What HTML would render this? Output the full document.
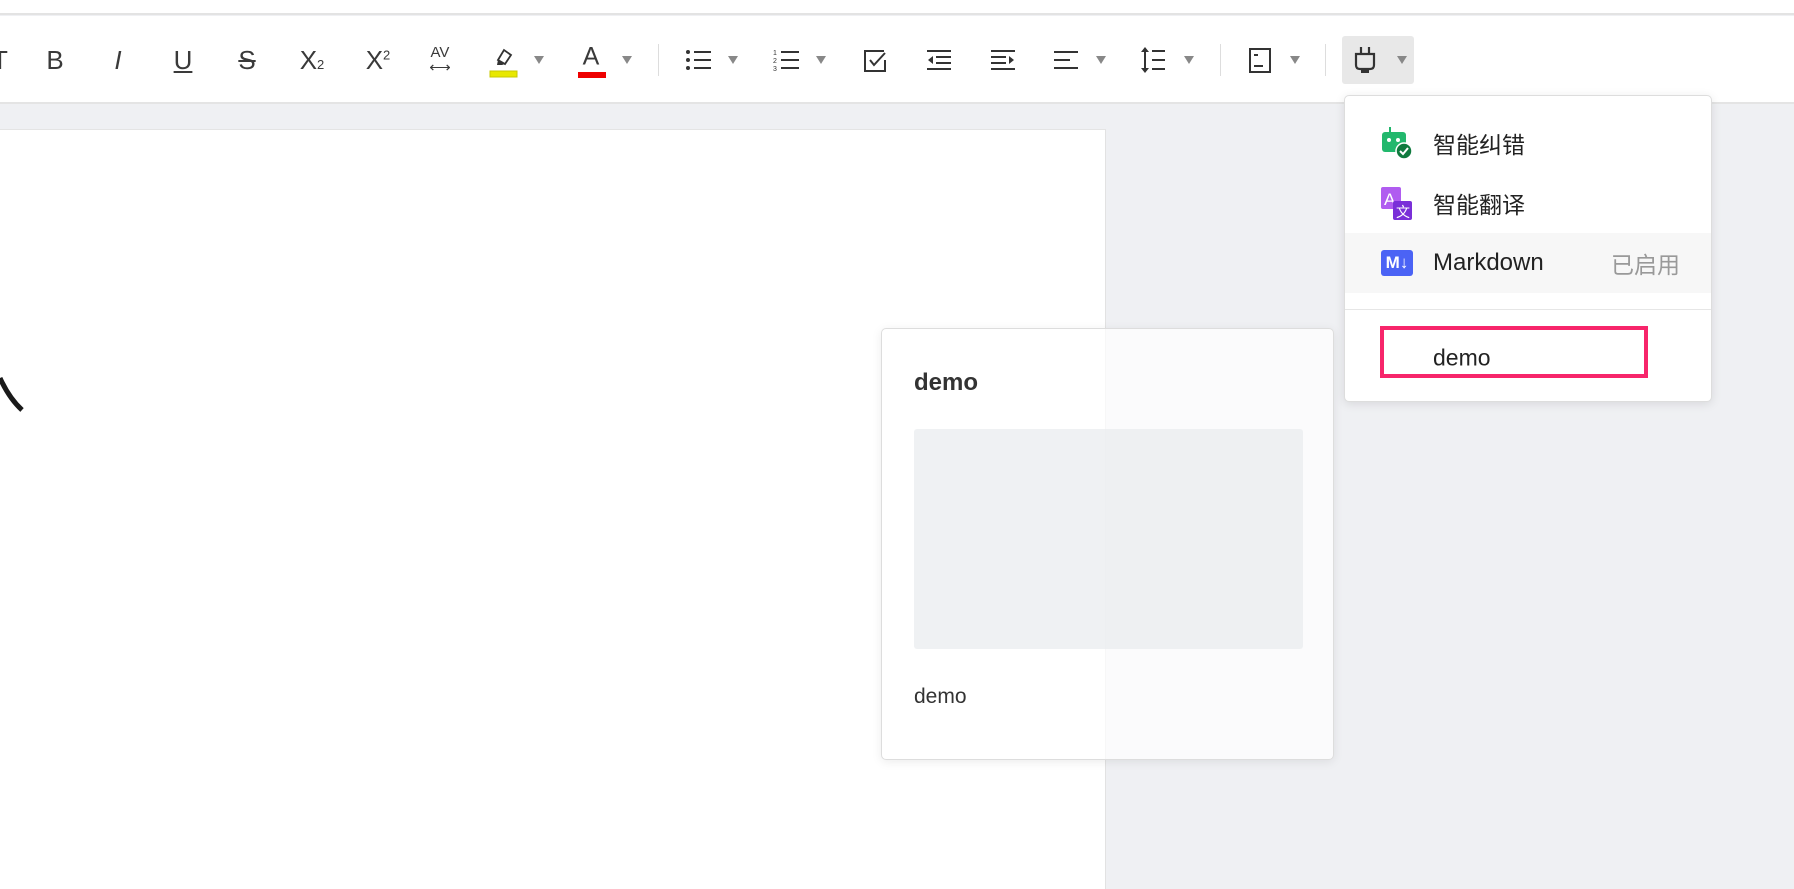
<!DOCTYPE html>
<html><head><meta charset="utf-8"><style>
*{margin:0;padding:0;box-sizing:border-box}
body{width:1794px;height:868px;overflow:hidden;background:#eff0f3;font-family:"Liberation Sans","Noto Sans CJK SC",sans-serif;position:relative}
.top{position:absolute;left:0;top:0;width:1794px;height:15px;background:#fff;border-bottom:2px solid #e3e3e3}
.tb{position:absolute;left:0;top:16px;width:1794px;height:88px;background:#fff;border-bottom:2px solid #e4e4e4}
.ic{position:absolute;top:60px;transform:translate(-50%,-50%);color:#3a3a3a;font-size:26px;line-height:1}
.ar{position:absolute;top:56px;width:0;height:0;border-left:5px solid transparent;border-right:5px solid transparent;border-top:8px solid #888}
.sep{position:absolute;top:44px;width:1px;height:32px;background:#ddd}
.page{position:absolute;left:0;top:129px;width:1106px;height:760px;background:#fff;border-right:1px solid #e2e2e2;border-top:1px solid #e4e4e4}
.card{position:absolute;left:881px;top:328px;width:453px;height:432px;background:rgba(255,255,255,0.72);border:1px solid #ddd;border-radius:5px;box-shadow:0 2px 10px rgba(0,0,0,0.08)}
.menu{position:absolute;left:1344px;top:95px;width:368px;height:307px;background:#fff;border:1px solid #ddd;border-radius:5px;box-shadow:0 2px 10px rgba(0,0,0,0.1)}
.it{position:absolute;left:88px;font-size:23px;color:#222;transform:translateY(-50%)}
</style></head><body>
<div class="top"></div>
<div class="tb"></div>
<div class="ic" style="left:0">T</div>
<div class="ic" style="left:55px">B</div>
<div class="ic" style="left:118px;font-style:italic">I</div>
<div class="ic" style="left:183px;text-decoration:underline">U</div>
<div class="ic" style="left:247px;text-decoration:line-through">S</div>
<div class="ic" style="left:312px">X<span style="font-size:13px">2</span></div>
<div class="ic" style="left:378px">X<sup style="font-size:13px">2</sup></div>
<div class="ic" style="left:440px;font-size:15px;text-align:center;line-height:15px">AV<br>⟷</div>
<svg style="position:absolute;left:489px;top:44px" width="30" height="34" viewBox="0 0 30 34"><path d="M9 16 L15 6 L22 11 L16 20 Z" fill="none" stroke="#333" stroke-width="1.8"/><path d="M9 16 L8 21 L13 21 L16 20" fill="#333"/><rect x="1" y="27" width="27" height="6" fill="#e8e800" stroke="#c8c800"/></svg>
<div class="ar" style="left:534px"></div>
<div class="ic" style="left:591px;top:57px;font-size:25px">A</div>
<div style="position:absolute;left:578px;top:72px;width:28px;height:6px;background:#e00"></div>
<div class="ar" style="left:622px"></div>
<div class="sep" style="left:658px"></div>
<svg style="position:absolute;left:685px;top:48px" width="28" height="24"><g fill="#333"><circle cx="3" cy="4" r="2"/><circle cx="3" cy="12" r="2"/><circle cx="3" cy="20" r="2"/><rect x="9" y="3" width="17" height="2"/><rect x="9" y="11" width="17" height="2"/><rect x="9" y="19" width="17" height="2"/></g></svg>
<div class="ar" style="left:728px"></div>
<svg style="position:absolute;left:773px;top:48px" width="28" height="24"><g fill="#333" font-size="7" font-family="Liberation Sans"><text x="0" y="7">1</text><text x="0" y="15">2</text><text x="0" y="23">3</text><rect x="8" y="3" width="18" height="2"/><rect x="8" y="11" width="18" height="2"/><rect x="8" y="19" width="18" height="2"/></g></svg>
<div class="ar" style="left:816px"></div>
<svg style="position:absolute;left:862px;top:48px" width="26" height="26"><path d="M22 3 H3 V23 H23 V12" fill="none" stroke="#333" stroke-width="2"/><path d="M8 12 L12 17 L23 5" fill="none" stroke="#333" stroke-width="2"/></svg>
<svg style="position:absolute;left:926px;top:48px" width="26" height="24"><g fill="#333"><rect x="1" y="2" width="24" height="2"/><rect x="10" y="8" width="15" height="2"/><rect x="10" y="14" width="15" height="2"/><rect x="1" y="20" width="24" height="2"/><path d="M7 8 L2 12 L7 16Z"/></g></svg>
<svg style="position:absolute;left:990px;top:48px" width="26" height="24"><g fill="#333"><rect x="1" y="2" width="24" height="2"/><rect x="1" y="8" width="15" height="2"/><rect x="1" y="14" width="15" height="2"/><rect x="1" y="20" width="24" height="2"/><path d="M19 8 L24 12 L19 16Z"/></g></svg>
<svg style="position:absolute;left:1053px;top:48px" width="26" height="24"><g fill="#333"><rect x="1" y="3" width="24" height="2"/><rect x="1" y="11" width="16" height="2"/><rect x="1" y="19" width="24" height="2"/></g></svg>
<div class="ar" style="left:1096px"></div>
<svg style="position:absolute;left:1141px;top:47px" width="26" height="26"><g fill="#333"><rect x="3" y="2" width="2" height="22"/><path d="M4 0 L0 5 H8Z M4 26 L0 21 H8Z"/><rect x="11" y="3" width="13" height="2"/><rect x="11" y="12" width="13" height="2"/><rect x="11" y="21" width="13" height="2"/></g></svg>
<div class="ar" style="left:1184px"></div>
<div class="sep" style="left:1220px"></div>
<svg style="position:absolute;left:1248px;top:47px" width="24" height="26"><rect x="2" y="2" width="20" height="23" fill="none" stroke="#333" stroke-width="2"/><rect x="6" y="18" width="9" height="2" fill="#333"/><rect x="6" y="7" width="4" height="2" fill="#333"/></svg>
<div class="ar" style="left:1290px"></div>
<div class="sep" style="left:1325px"></div>
<div style="position:absolute;left:1342px;top:36px;width:72px;height:48px;background:#e8e8e8;border-radius:3px"></div>
<svg style="position:absolute;left:1352px;top:46px" width="26" height="30"><path d="M9 1 V7 M17 1 V7" stroke="#333" stroke-width="2.2"/><path d="M4 8 H22 V19 Q22 23 18 23 H8 Q4 23 4 19 Z" fill="none" stroke="#333" stroke-width="2.2"/><rect x="9" y="24" width="8" height="3" fill="#333"/></svg>
<div class="ar" style="left:1397px"></div>
<div class="page"></div>
<svg style="position:absolute;left:0;top:370px" width="30" height="45"><path d="M0 8 Q9 28 22 40" fill="none" stroke="#1a1a1a" stroke-width="5"/></svg>
<div class="card">
<div style="position:absolute;left:32px;top:40px;font-size:24px;font-weight:bold;color:#333">demo</div>
<div style="position:absolute;left:32px;top:100px;width:389px;height:220px;background:rgba(232,235,238,0.7);border-radius:3px"></div>
<div style="position:absolute;left:32px;top:356px;font-size:21px;color:#333">demo</div>
</div>
<div class="menu">
<svg style="position:absolute;left:36px;top:31px" width="32" height="32"><rect x="8" y="0" width="2" height="6" fill="#1fb56a"/><rect x="1" y="5" width="24" height="20" rx="3" fill="#22b86d"/><circle cx="8" cy="13" r="2" fill="#fff"/><circle cx="17" cy="13" r="2" fill="#fff"/><circle cx="23" cy="24" r="8" fill="#0f7a3e" stroke="#fff" stroke-width="1.5"/><path d="M19 24 L22 27 L27 21" fill="none" stroke="#fff" stroke-width="2"/></svg>
<div class="it" style="top:47px">智能纠错</div>
<svg style="position:absolute;left:36px;top:91px" width="32" height="34"><rect x="0" y="0" width="20" height="22" rx="2" fill="#b05cf0"/><text x="3" y="18" fill="#fff" font-size="17" font-family="Liberation Sans">A</text><rect x="12" y="14" width="19" height="19" rx="2" fill="#7a2fd8"/><text x="15" y="30" fill="#fff" font-size="14" font-family="Noto Sans CJK SC">文</text></svg>
<div class="it" style="top:107px">智能翻译</div>
<div style="position:absolute;left:0;top:137px;width:366px;height:60px;background:#f7f7f7"></div>
<div style="position:absolute;left:36px;top:154px;width:32px;height:26px;background:#4b63f5;border-radius:3px;color:#fff;font-size:17px;font-weight:bold;line-height:26px;text-align:center">M↓</div>
<div class="it" style="top:167px;font-size:24px">Markdown</div>
<div class="it" style="top:167px;left:266px;color:#999">已启用</div>
<div style="position:absolute;left:0;top:213px;width:366px;height:1px;background:#e6e6e6"></div>
<div style="position:absolute;left:35px;top:230px;width:268px;height:52px;border:4px solid #f7256b"></div>
<div class="it" style="top:262px">demo</div>
</div>
</body></html>
